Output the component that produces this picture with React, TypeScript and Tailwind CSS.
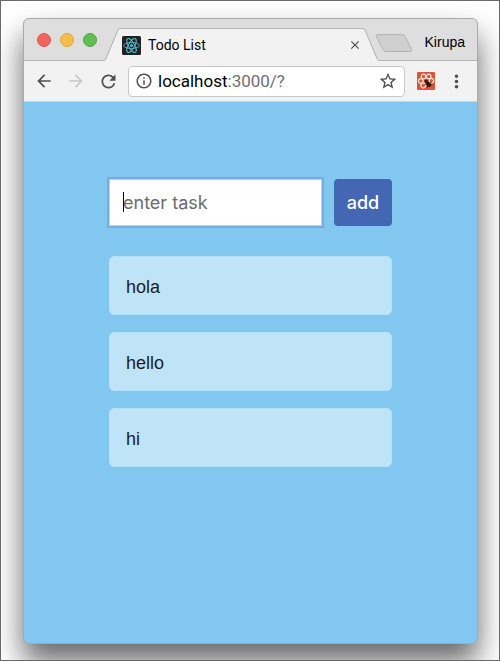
import { useState } from "react";
import {
  MdArrowBack,
  MdArrowForward,
  MdClose,
  MdInfoOutline,
  MdMoreVert,
  MdRefresh,
  MdStarOutline,
} from "react-icons/md";

const INITIAL_TASKS = ["hola", "hello", "hi"];

export default function App() {
  return (
    <div className="flex min-h-screen overflow-hidden border border-[#6b696a] bg-white pt-[17px] pr-[21px] pb-4 pl-[22px] font-['Inter',sans-serif]">
      <div className="flex flex-1 flex-col overflow-hidden rounded-md border border-[#a9a9a9] bg-[#82c7f0] shadow-[0_18px_30px_0_rgba(0,0,0,0.6)]">
        <TabStrip />
        <Toolbar />
        <TodoList />
      </div>
    </div>
  );
}

const TabStrip = () => {
  return (
    <header className="flex h-[42px] items-end border-b border-[#b4b4b4] bg-[#dedede]">
      <div className="flex h-full shrink-0 items-center gap-[9px] pr-[7px] pl-[13px]">
        <WindowButton label="Close window" className="border-[#e0554e] bg-[#f0665f]" />
        <WindowButton label="Minimize window" className="border-[#dfa63c] bg-[#f6bd4a]" />
        <WindowButton label="Zoom window" className="border-[#4ca843] bg-[#5fbf55]" />
      </div>
      <div className="-mb-px flex h-[33px] min-w-0 flex-1">
        <TabEdge />
        <div className="flex min-w-0 flex-1 items-center border-t border-[#b4b4b4] bg-[#f2f2f2]">
          <ReactBadge />
          <span className="ml-[7px] flex-1 truncate font-['Roboto',sans-serif] text-sm text-black">
            Todo List
          </span>
          <button aria-label="Close tab" className="text-[#4c4c4c]">
            <MdClose size={14} />
          </button>
        </div>
        <TabEdge className="-scale-x-100" />
      </div>
      <div className="flex h-full w-[98px] shrink-0 items-center justify-between pt-1 pr-3">
        <button aria-label="New tab" className="-ml-1 pt-1">
          <svg width="38" height="19" viewBox="0 0 38 19">
            <path
              d="M3 .7h24.500q2 0 2.800 1.800l6.200 13q.7 2-1.500 2H11q-2.200 0-3-1.900L1.300 2.500Q.7.700 3 .7Z"
              fill="#d0d0d0"
              stroke="#b2b2b2"
            />
          </svg>
        </button>
        <span className="font-['Liberation_Sans',sans-serif] text-sm text-black">
          Kirupa
        </span>
      </div>
    </header>
  );
};

type WindowButtonProps = {
  label: string;
  className: string;
};

const WindowButton = ({ label, className }: WindowButtonProps) => {
  return (
    <button
      aria-label={label}
      className={`size-[14px] rounded-full border ${className}`}
    />
  );
};

const TabEdge = ({ className = "" }: { className?: string }) => {
  return (
    <svg
      width="17"
      height="33"
      viewBox="0 0 17 33"
      className={`shrink-0 ${className}`}
    >
      <path d="M0 33V32.500Q1.500 32 2.200 30L14 2Q14.700.5 17 .5V33Z" fill="#f2f2f2" />
      <path
        d="M0 32.500Q1.500 32 2.200 30L14 2Q14.700.5 17 .5"
        fill="none"
        stroke="#b0b0b0"
      />
    </svg>
  );
};

const ReactBadge = () => {
  return (
    <svg width="19" height="19" viewBox="0 0 19 19" className="ml-px shrink-0">
      <rect width="19" height="19" rx="1.500" fill="#202224" />
      <g fill="none" stroke="#5ab9d3" strokeWidth=".9">
        <ellipse cx="9.500" cy="9.500" rx="7.800" ry="3" />
        <ellipse cx="9.500" cy="9.500" rx="7.800" ry="3" transform="rotate(60 9.500 9.500)" />
        <ellipse cx="9.500" cy="9.500" rx="7.800" ry="3" transform="rotate(120 9.500 9.500)" />
      </g>
      <circle cx="9.500" cy="9.500" r="1.500" fill="#5ab9d3" />
    </svg>
  );
};

const Toolbar = () => {
  return (
    <div className="flex h-[41px] items-center border-b border-[#d3d3d3] bg-[#f2f2f2] pr-[10px] pl-[10px] text-[#505050]">
      <div className="flex shrink-0 gap-3">
        <button aria-label="Back">
          <MdArrowBack size={20} />
        </button>
        <button aria-label="Forward" className="text-[#c8c8c8]">
          <MdArrowForward size={20} />
        </button>
        <button aria-label="Reload">
          <MdRefresh size={21} />
        </button>
      </div>
      <div className="ml-[9px] flex h-[31px] min-w-0 flex-1 items-center rounded border border-[#c9c9c9] bg-white px-[6px]">
        <MdInfoOutline size={18} className="shrink-0" />
        <p className="ml-[5px] flex-1 truncate pt-px font-['Roboto',sans-serif] text-[17px] text-[#6f6f6f]">
          <span className="text-black">localhost</span>:3000/?
        </p>
        <button aria-label="Bookmark this page">
          <MdStarOutline size={20} />
        </button>
      </div>
      <button aria-label="React Developer Tools" className="ml-3">
        <DevToolsBadge />
      </button>
      <button aria-label="Menu" className="ml-[11px]">
        <MdMoreVert size={21} />
      </button>
    </div>
  );
};

const DevToolsBadge = () => {
  return (
    <svg width="18" height="18" viewBox="0 0 18 18">
      <rect width="18" height="18" rx="1" fill="#d9553c" />
      <g fill="none" stroke="#fbe3dc" strokeWidth="1.200">
        <circle cx="6.500" cy="4.500" r="2.300" />
        <circle cx="11.700" cy="4.500" r="2.300" />
        <circle cx="3.800" cy="9" r="2.300" />
        <circle cx="14.400" cy="8.600" r="2.300" />
        <circle cx="6.200" cy="13.500" r="2.300" />
      </g>
      {/* bug */}
      <g stroke="#2b1714" fill="none" strokeWidth=".8">
        <ellipse
          cx="11.300"
          cy="12"
          rx="1.700"
          ry="3"
          transform="rotate(-40 11.300 12)"
          fill="#2b1714"
        />
        <circle cx="8.600" cy="8.800" r=".9" fill="#2b1714" />
        <path d="M10.500 9.500 11 7.500M12.500 11l2.200-.7M9 12l-1.700 1M10.500 14v1.800M13.500 13H15.500" />
      </g>
    </svg>
  );
};

const TodoList = () => {
  const [tasks, setTasks] = useState(INITIAL_TASKS);
  const [text, setText] = useState("");

  const addTask = (e: React.FormEvent) => {
    e.preventDefault();
    if (!text.trim()) return;
    setTasks([text, ...tasks]);
    setText("");
  };

  return (
    <main className="flex-1 px-4 pt-[77px] pb-8">
      <div className="mx-auto w-full max-w-[283px]">
        <form onSubmit={addTask} className="flex gap-3">
          <div className="relative min-w-0 flex-1">
            <input
              aria-label="Task"
              placeholder="enter task"
              value={text}
              onChange={(e) => setText(e.target.value)}
              className="h-[47px] w-full border border-[#b9d2f2] bg-white px-[13px] text-lg text-black ring-2 ring-[#6fa5de]/80 outline-none placeholder:text-[#6b6b6b]"
            />
            {!text && (
              <span className="pointer-events-none absolute top-[13px] left-[14px] h-5 w-px bg-black" />
            )}
          </div>
          <button
            type="submit"
            className="h-[47px] w-[58px] rounded bg-[#4467b4] text-lg font-medium text-white"
          >
            add
          </button>
        </form>
        <ul className="mt-[30px] flex flex-col gap-[17px]">
          {tasks.map((task, i) => (
            <li
              key={i}
              className="flex h-[59px] items-center rounded-[5px] border border-[#b5e0f8] bg-[#bfe4f8] px-4 pt-[2px] font-['Liberation_Sans',sans-serif] text-lg text-[#1d1d1d]"
            >
              {task}
            </li>
          ))}
        </ul>
      </div>
    </main>
  );
};
